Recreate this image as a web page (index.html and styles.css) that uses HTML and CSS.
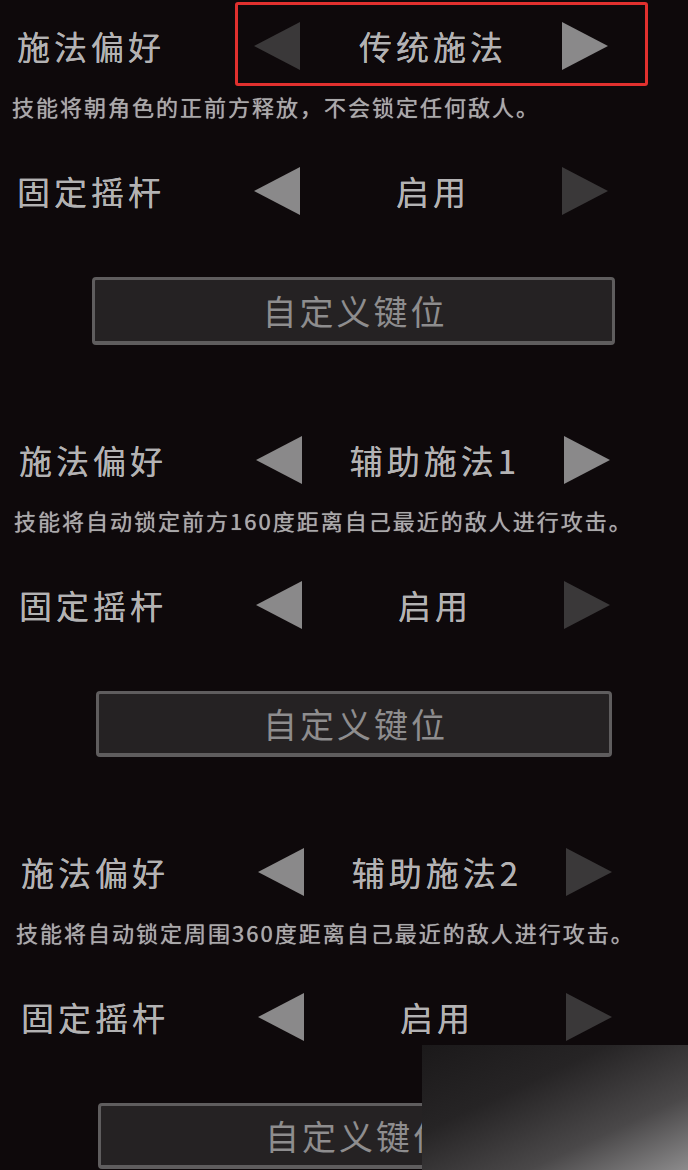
FILE: index.html
```html
<!DOCTYPE html>
<html lang="zh-CN">
<head>
<meta charset="utf-8">
<title>施法设置</title>
<link rel="stylesheet" href="styles.css">
</head>
<body>
<main class="screen">
  <section class="group group--one">
    <div class="row">
      <span class="label">施法偏好</span>
      <div class="control control--marked">
        <svg class="arrow arrow--off" viewBox="0 0 46 48"><polygon points="46,0 46,48 0,24"/></svg>
        <span class="value">传统施法</span>
        <svg class="arrow arrow--on" viewBox="0 0 46 48"><polygon points="0,0 0,48 46,24"/></svg>
      </div>
    </div>
    <p class="desc">技能将朝角色的正前方释放，不会锁定任何敌人。</p>
    <div class="row row--second">
      <span class="label">固定摇杆</span>
      <div class="control">
        <svg class="arrow arrow--on" viewBox="0 0 46 48"><polygon points="46,0 46,48 0,24"/></svg>
        <span class="value">启用</span>
        <svg class="arrow arrow--off" viewBox="0 0 46 48"><polygon points="0,0 0,48 46,24"/></svg>
      </div>
    </div>
    <button class="keys" type="button">自定义键位</button>
  </section>

  <section class="group group--two">
    <div class="row">
      <span class="label">施法偏好</span>
      <div class="control">
        <svg class="arrow arrow--on" viewBox="0 0 46 48"><polygon points="46,0 46,48 0,24"/></svg>
        <span class="value">辅助施法1</span>
        <svg class="arrow arrow--on" viewBox="0 0 46 48"><polygon points="0,0 0,48 46,24"/></svg>
      </div>
    </div>
    <p class="desc">技能将自动锁定前方160度距离自己最近的敌人进行攻击。</p>
    <div class="row row--second">
      <span class="label">固定摇杆</span>
      <div class="control">
        <svg class="arrow arrow--on" viewBox="0 0 46 48"><polygon points="46,0 46,48 0,24"/></svg>
        <span class="value">启用</span>
        <svg class="arrow arrow--off" viewBox="0 0 46 48"><polygon points="0,0 0,48 46,24"/></svg>
      </div>
    </div>
    <button class="keys" type="button">自定义键位</button>
  </section>

  <section class="group group--three">
    <div class="row">
      <span class="label">施法偏好</span>
      <div class="control">
        <svg class="arrow arrow--on" viewBox="0 0 46 48"><polygon points="46,0 46,48 0,24"/></svg>
        <span class="value">辅助施法2</span>
        <svg class="arrow arrow--off" viewBox="0 0 46 48"><polygon points="0,0 0,48 46,24"/></svg>
      </div>
    </div>
    <p class="desc">技能将自动锁定周围360度距离自己最近的敌人进行攻击。</p>
    <div class="row row--second">
      <span class="label">固定摇杆</span>
      <div class="control">
        <svg class="arrow arrow--on" viewBox="0 0 46 48"><polygon points="46,0 46,48 0,24"/></svg>
        <span class="value">启用</span>
        <svg class="arrow arrow--off" viewBox="0 0 46 48"><polygon points="0,0 0,48 46,24"/></svg>
      </div>
    </div>
    <button class="keys" type="button">自定义键位</button>
  </section>

  <div class="watermark" aria-hidden="true"></div>
</main>
</body>
</html>
```
FILE: styles.css
```css
* { box-sizing: border-box; }

html, body {
  margin: 0;
  padding: 0;
  background: #0e090b;
}

body {
  width: 688px;
  height: 1170px;
  overflow: hidden;
  font-family: "Noto Sans CJK SC", "Noto Sans", sans-serif;
  color: #b3b2b3;
}

.screen {
  position: relative;
  width: 688px;
  height: 1170px;
  padding-top: 22px;
  display: flex;
  flex-direction: column;
}

.group {
  display: flex;
  flex-direction: column;
  margin-bottom: 91px;
}

.group--one { padding-left: 15px; }
.group--two { padding-left: 17px; }
.group--three { padding-left: 19px; }

.row {
  display: flex;
  align-items: center;
  height: 48px;
}

.row--second { margin-top: 49px; }

.label {
  width: 239px;
  padding-left: 2px;
  font-size: 33px;
  letter-spacing: 4px;
  line-height: 48px;
  white-space: nowrap;
  text-shadow: 0 0 0.6px #b3b2b3;
}

.control {
  position: relative;
  display: flex;
  align-items: center;
  height: 48px;
}

.control--marked::after {
  content: "";
  position: absolute;
  left: -19px;
  right: -40px;
  top: -20px;
  bottom: -16px;
  border: 3px solid #e0302e;
  border-radius: 3px;
  pointer-events: none;
}

.arrow {
  width: 46px;
  height: 48px;
  flex: none;
}

.arrow--on { fill: #8a898a; }
.arrow--off { fill: #3a3839; }

.value {
  width: 262px;
  text-align: center;
  font-size: 33px;
  letter-spacing: 4px;
  text-indent: 4px;
  line-height: 48px;
  white-space: nowrap;
  text-shadow: 0 0 0.6px #b3b2b3;
}

.desc {
  margin: 24px 0 0 -3px;
  height: 24px;
  font-size: 22px;
  line-height: 24px;
  letter-spacing: 2px;
  color: #aaa9aa;
  white-space: nowrap;
  text-shadow: 0 0 0.7px #aaa9aa;
}

.keys {
  margin: 62px 0 0 77px;
  align-self: flex-start;
  width: 523px;
  height: 68px;
  background: #252223;
  border: 3px solid #5f5d5e;
  border-bottom-width: 4px;
  border-radius: 4px;
  font-family: "Noto Sans CJK SC", "Noto Sans", sans-serif;
  font-size: 34px;
  letter-spacing: 3px;
  text-indent: 3px;
  color: #8e8d8e;
  padding: 0;
  line-height: 1;
}

.group--two .keys,
.group--three .keys {
  width: 516px;
  height: 66px;
  margin-left: 79px;
}

.watermark {
  position: absolute;
  left: 422px;
  top: 1045px;
  right: 0;
  bottom: 0;
  background: linear-gradient(155deg, #1b191a 0%, #262425 35%, #4a4849 70%, #8c8b8c 100%);
}
```
